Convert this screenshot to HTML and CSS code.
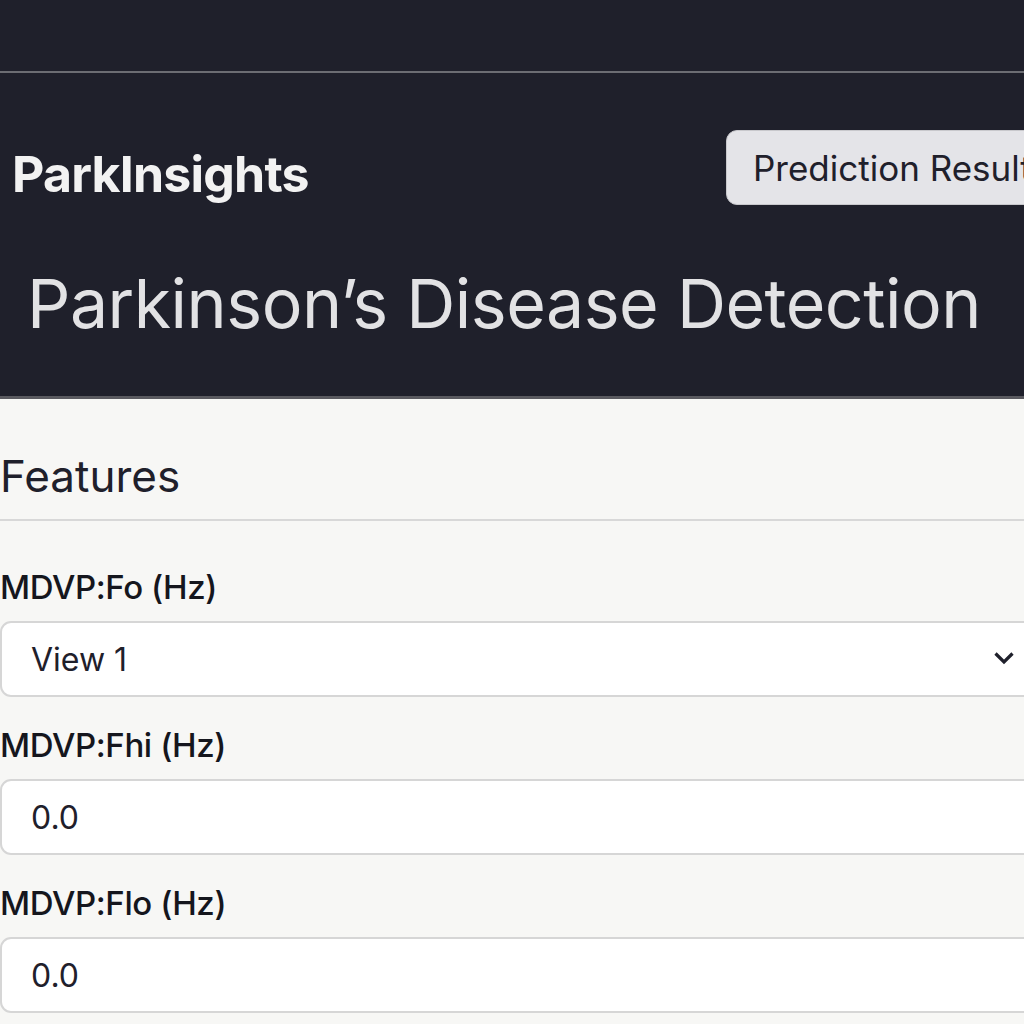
FILE: index.html
```html
<!DOCTYPE html>
<html lang="en">
<head>
<meta charset="utf-8">
<title>ParkInsights</title>
<link rel="stylesheet" href="styles.css">
</head>
<body>
<div class="page">
  <header class="hero">
    <div class="topbar"></div>
    <div class="nav">
      <div class="brand">ParkInsights</div>
      <button class="nav-btn" type="button">Prediction Result</button>
    </div>
    <h1 class="title">Parkinson’s Disease Detection</h1>
  </header>
  <main class="content">
    <h2 class="section-title">Features</h2>
    <form class="form">
      <div class="field">
        <label class="label">MDVP:Fo (Hz)</label>
        <div class="control select">
          <span class="value">View 1</span>
          <svg class="chev" width="20" height="14" viewBox="0 0 20 14"><path d="M1.5 2.5 L10 11 L18.5 2.5" fill="none" stroke="#1f202b" stroke-width="3.2"/></svg>
        </div>
      </div>
      <div class="field">
        <label class="label">MDVP:Fhi (Hz)</label>
        <div class="control"><span class="value">0.0</span></div>
      </div>
      <div class="field">
        <label class="label">MDVP:Flo (Hz)</label>
        <div class="control"><span class="value">0.0</span></div>
      </div>
    </form>
  </main>
</div>
</body>
</html>
```
FILE: styles.css
```css
* { box-sizing: border-box; }
html, body { margin: 0; padding: 0; }
body {
  width: 1024px;
  height: 1024px;
  overflow: hidden;
  background: #f7f7f5;
  font-family: "Inter", "Noto Sans", sans-serif;
}
.page { width: 1024px; }
.hero {
  background: #1f202b;
  height: 399px;
  border-bottom: 3px solid #5a5a60;
  overflow: hidden;
}
.topbar {
  height: 73px;
  border-bottom: 2px solid #6c6d73;
}
.nav {
  display: flex;
  justify-content: space-between;
  align-items: flex-start;
  padding: 57px 0 0 12px;
  height: 133px;
}
.brand {
  color: #f2f2f2;
  font-weight: 700;
  font-size: 50px;
  letter-spacing: -0.8px;
  line-height: 1;
  margin-top: 19px;
}
.nav-btn {
  width: 320px;
  height: 75px;
  margin-right: -22px;
  background: #e4e4e8;
  border: 1px solid #c8c8cc;
  border-radius: 11px;
  color: #1f202b;
  font-family: inherit;
  font-size: 35px;
  text-align: left;
  padding: 0 0 0 26px;
  white-space: nowrap;
  overflow: hidden;
}
.title {
  margin: 0;
  padding: 0 0 0 27px;
  color: #e2e2e4;
  font-weight: 400;
  font-size: 68px;
  line-height: 1;
  letter-spacing: -0.5px;
  margin-top: 63px;
}
.content { padding: 0; }
.section-title {
  margin: 0;
  font-weight: 400;
  font-size: 44px;
  color: #1f202b;
  line-height: 1;
  padding-top: 55px;
  height: 122px;
  border-bottom: 2px solid #d8d8d8;
}
.form { padding-top: 50px; }
.label {
  display: block;
  font-size: 33px;
  font-weight: 500;
  color: #15161d;
  line-height: 1;
  letter-spacing: -0.4px;
  height: 50px;
}
.control {
  width: 1040px;
  height: 76px;
  background: #ffffff;
  border: 2px solid #d6d6d6;
  border-radius: 11px;
  display: flex;
  align-items: center;
  padding-left: 29px;
  margin-bottom: 32px;
}
.value {
  font-size: 32px;
  color: #1f202b;
}
.select { position: relative; }
.chev {
  position: absolute;
  left: 992px;
  top: 28px;
}
```
